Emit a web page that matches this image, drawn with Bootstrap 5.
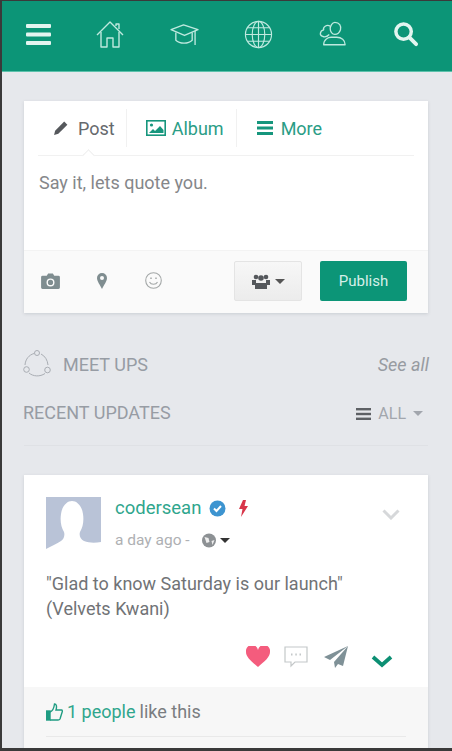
<!DOCTYPE html>
<html lang="en">
<head>
    <meta charset="UTF-8">
    <meta name="viewport" content="width=device-width, initial-scale=1.0">
    <title>Feed</title>
    <link href="https://cdn.jsdelivr.net/npm/bootstrap@5.3.0/dist/css/bootstrap.min.css" rel="stylesheet">
    <style>
        html, body { height: 751px; overflow: hidden; }
        body { background: #3a3a3a; font-family: Roboto, "Liberation Sans", sans-serif; color: #6d7074; padding: 1px 0 3px 2px; }
        .shell { height: 747px; background: #e6e8ec; overflow: hidden; }
        .topbar { height: 71px; background: #0c9577; border-bottom: 1px solid #5cc1ab; padding: 0 33px 4px 24px; }
        .topbar svg { display: block; }
        .feed-wrap { padding: 29px 24px 0 22px; }
        .box { background: #fff; box-shadow: 0 1px 3px rgba(80, 90, 100, .18); }
        .tabbar { margin: 0 14px 0 14px; height: 55px; border-bottom: 1px solid #f1f1f1; position: relative; }
        .tab-item { height: 38px; font-size: 18px; color: #2a9d86; border-right: 1px solid #f1f1f1; }
        .tab-post { padding: 0 11px 0 15px; gap: 9px; color: #66696d; }
        .tab-album { padding: 0 12px 0 19px; gap: 6px; }
        .tab-more { padding: 0 0 0 20px; gap: 8px; border-right: 0; }
        .tab-pointer { position: absolute; left: 46px; bottom: -5px; width: 9px; height: 9px; background: #fff; border-top: 1px solid #eee; border-left: 1px solid #eee; transform: rotate(45deg); }
        .say-it { height: 94px; padding: 13px 15px 0; font-size: 18px; color: #85878a; }
        .box-foot { height: 63px; background: #fafafa; border-top: 1px solid #f3f3f3; padding: 0 21px 2px 17px; }
        .foot-icons { gap: 37px; }
        .smile-icon { margin-left: 1px; margin-top: -2px; }
        .group-btn { width: 68px; height: 40px; background: linear-gradient(#f7f7f7, #ececec); border: 1px solid #e4e4e4; border-radius: 2px; color: #555; gap: 5px; }
        .publish-btn { width: 87px; height: 40px; margin-left: 18px; background: #0c9577; color: #d6efe9; font-size: 15px; border-radius: 2px; border: 0; padding: 0; }
        .caret-down { width: 0; height: 0; border-left: 5px solid transparent; border-right: 5px solid transparent; border-top: 5px solid currentColor; display: inline-block; }
        .meet-row { margin: 37px -1px 0 -1px; height: 28px; font-size: 18px; color: #979ca4; }
        .meet-label { margin-left: 12px; }
        .see-all { font-style: italic; font-size: 18px; color: #979ba1; }
        .recent-row { margin: 20px 0 0 -1px; height: 28px; font-size: 18px; color: #979ca4; }
        .filter-link { font-size: 16px; color: #a2a6ad; gap: 7px; margin: 3px 5px 0 0; }
        .rule { height: 1px; background: #dfe1e5; margin-top: 19px; }
        .post-box { margin-top: 29px; height: 300px; }
        .post-body { height: 212px; padding: 22px 37px 0 22px; position: relative; }
        .avatar-pic { width: 55px; height: 52px; display: block; }
        .user-head { gap: 14px; }
        .user-name { font-size: 18.5px; color: #2fa68d; line-height: 22px; }
        .post-time { font-size: 15.500px; color: #aeb0b3; margin-top: 12px; line-height: 18px; gap: 7px; }
        .post-text { margin-top: 22px; font-size: 18px; line-height: 25px; color: #717376; }
        .post-actions { position: absolute; left: 222px; top: 170px; gap: 14px; }
        .post-send { margin-left: 2px; }
        .post-down { margin: 10px 0 0 9px; }
        .post-chevron { position: absolute; right: 28px; top: 34px; }
        .post-foot { height: 70px; background: #f7f7f7; padding: 0 22px; font-size: 18px; }
        .like-line { height: 50px; border-bottom: 1px solid #e9e9e9; gap: 4px; color: #7a7d80; }
        .like-count { color: #2fa68d; }
        .caret-dark { color: #333; margin-left: -4px; }
    </style>
</head>
<body>
    <div class="shell">
        <!-- top icons -->
        <nav class="topbar d-flex align-items-center justify-content-between">
            <svg width="25" height="21" viewBox="0 0 25 21" fill="#e3f5f0"><rect y="0" width="25" height="4" rx="1"/><rect y="8.500" width="25" height="4" rx="1"/><rect y="17" width="25" height="4" rx="1"/></svg>
            <svg width="28" height="27" viewBox="0 0 28 27" fill="none" stroke="#bfe9df" stroke-width="1.400" stroke-linejoin="round"><path d="M1 14 14 1 27 14"/><path d="M5 11v15h6v-9h6v9h6V11"/><path d="M20 5V3h3v5"/></svg>
            <svg width="29" height="25" viewBox="0 0 30 26" fill="none" stroke="#bfe9df" stroke-width="1.400" stroke-linejoin="round"><path d="M1 8 14 3l15 5-14 6z"/><path d="M6 11v8c4 4 13 4 17 0v-8"/><path d="M26 9v15"/></svg>
            <svg width="29" height="29" viewBox="0 0 30 30" fill="none" stroke="#bfe9df" stroke-width="1.200"><circle cx="15" cy="15" r="13.500"/><ellipse cx="15" cy="15" rx="6.500" ry="13.500"/><path d="M15 1.500v27M1.500 15h27M3.500 8h23M3.500 22h23"/></svg>
            <svg width="28" height="26" viewBox="0 0 30 27" fill="none" stroke="#bfe9df" stroke-width="1.400" stroke-linejoin="round"><path d="M17 1c5 0 7 4 6 8-1 3-3 5-6 5s-5-3-5-6 2-7 5-7z"/><path d="M12 5C8 3 4 6 5 9c-4 1-5 6-1 7 2 1 5 0 7-2"/><path d="M5 25c0-6 5-8 8-8h6c5 0 9 3 9 8z"/></svg>
            <svg width="27" height="27" viewBox="0 0 28 28" fill="none" stroke="#e3f5f0"><circle cx="12" cy="11" r="8" stroke-width="3.600"/><path d="M18 17l7 7" stroke-width="4" stroke-linecap="round"/></svg>
        </nav>

        <div class="feed-wrap">
            <!-- composer -->
            <section class="box">
                <div class="tabbar d-flex align-items-center">
                    <a class="tab-item tab-post d-flex align-items-center text-decoration-none">
                        <svg width="16" height="16" viewBox="0 0 15 15" fill="#55585c"><path d="M10.500 1.500 13.500 4.500 5 13 1 14l1-4z"/></svg>Post
                    </a>
                    <a class="tab-item tab-album d-flex align-items-center text-decoration-none">
                        <svg width="20" height="16" viewBox="0 0 20 16"><rect x=".8" y=".8" width="18.400" height="14.400" fill="none" stroke="#16967d" stroke-width="1.600"/><circle cx="5.500" cy="5" r="1.600" fill="#16967d"/><path d="M3 13l4-4 2 2 5-5 3.500 4v3z" fill="#16967d"/></svg>Album
                    </a>
                    <a class="tab-item tab-more d-flex align-items-center text-decoration-none">
                        <svg width="16" height="14" viewBox="0 0 16 14" fill="#16967d"><rect width="16" height="3"/><rect y="5.500" width="16" height="3"/><rect y="11" width="16" height="3"/></svg>More
                    </a>
                    <span class="tab-pointer"></span>
                </div>
                <div class="say-it">Say it, lets quote you.</div>
                <div class="box-foot d-flex align-items-center">
                    <div class="foot-icons d-flex align-items-center flex-grow-1">
                        <svg width="19" height="16" viewBox="0 0 20 17"><path d="M1.500 3H6l1.500-2.500h5L14 3h4.500A1.500 1.500 0 0 1 20 4.500V15.500A1.500 1.500 0 0 1 18.500 17h-17A1.500 1.500 0 0 1 0 15.500V4.500A1.500 1.500 0 0 1 1.500 3z" fill="#7f8d90"/><circle cx="10" cy="10" r="3.500" fill="none" stroke="#fafafa" stroke-width="1.500"/></svg>
                        <svg width="10" height="16" viewBox="0 0 10 16"><path d="M5 0a5 5 0 0 1 5 5c0 3-3 7-5 11C3 12 0 8 0 5a5 5 0 0 1 5-5z" fill="#7f8d90"/><circle cx="5" cy="5" r="2" fill="#fafafa"/></svg>
                        <svg class="smile-icon" width="17" height="17" viewBox="0 0 17 17" fill="none" stroke="#a4a8a8" stroke-width="1.100"><circle cx="8.500" cy="8.500" r="7.800"/><path d="M4.500 10c1.500 3 6.500 3 8 0"/><path d="M6 5.500v1.500M11 5.500v1.500" stroke-width="1.500"/></svg>
                    </div>
                    <button class="group-btn d-flex align-items-center justify-content-center p-0" type="button" aria-label="Audience">
                        <svg width="18" height="15" viewBox="0 0 18 15" fill="#55585c"><circle cx="4" cy="3" r="2.300"/><circle cx="14" cy="3" r="2.300"/><circle cx="9" cy="4" r="2.800"/><path d="M0 6h4v3h10V6h4v5h-3v4H3v-4H0z"/></svg>
                        <span class="caret-down"></span>
                    </button>
                    <button class="publish-btn" type="button">Publish</button>
                </div>
            </section>

            <div class="meet-row d-flex align-items-center">
                <svg width="28" height="28" viewBox="0 0 28 28" fill="none" stroke="#a9adb3" stroke-width="1"><path d="M11 3.500C6 5 2.500 9 2 15"/><path d="M18 4c4 2 6.500 6 7 11"/><path d="M6 23c4 3.500 11 4 16 .5"/><circle cx="14" cy="3" r="2.500"/><circle cx="3.500" cy="19.500" r="2.800"/><circle cx="24.500" cy="20" r="2.800"/></svg>
                <span class="meet-label flex-grow-1">MEET UPS</span>
                <a class="see-all text-decoration-none">See all</a>
            </div>
            <div class="recent-row d-flex align-items-center justify-content-between">
                <span>RECENT UPDATES</span>
                <span class="filter-link d-flex align-items-center">
                    <svg width="15" height="12" viewBox="0 0 15 12" fill="#5e6165"><rect width="15" height="2.400"/><rect y="4.800" width="15" height="2.400"/><rect y="9.600" width="15" height="2.400"/></svg>
                    ALL <span class="caret-down"></span>
                </span>
            </div>
            <div class="rule"></div>

            <!-- post -->
            <article class="box post-box">
                <div class="post-body">
                    <div class="user-head d-flex">
                        <svg class="avatar-pic" viewBox="0 0 55 52"><rect width="55" height="52" fill="#b9c3d7"/><path d="M0 52c5-3 11-5 15-8 3-2 4-6 3-9-3-5-4-11-3-18 1-8 6-13 11-13s10 5 11 13c1 7 0 13-3 18-1 3 0 7 4 9 5 2 11 2 17 1v7z" fill="#fff"/></svg>
                        <div>
                            <div class="user-name d-flex align-items-center gap-2">
                                <span>codersean</span>
                                <svg width="17" height="17" viewBox="0 0 17 17"><circle cx="8.500" cy="8.500" r="8" fill="#3d94d0"/><path d="M5 8.500l2.500 2.500L12 6" fill="none" stroke="#fff" stroke-width="2"/></svg>
                                <svg class="ms-1" width="10" height="17" viewBox="0 0 10 17"><path d="M5 0h3L6.500 6H10L3 17l1.500-8H1z" fill="#d8364a"/></svg>
                            </div>
                            <div class="post-time d-flex align-items-center">
                                <span>a day ago -</span>
                                <svg class="ms-1" width="16" height="15" viewBox="0 0 15 15"><circle cx="7.500" cy="7.500" r="7" fill="#8d9194"/><path d="M3 4l4 1 1 4-3 1zM10 8l3-1-2 5z" fill="#eee"/></svg>
                                <span class="caret-down caret-dark"></span>
                            </div>
                        </div>
                    </div>
                    <p class="post-text mb-0">"Glad to know Saturday is our launch"<br>(Velvets Kwani)</p>
                    <svg class="post-chevron" width="18" height="11" viewBox="0 0 18 11" fill="none" stroke="#d6d8da" stroke-width="3"><path d="M1.500 1.500 9 9l7.500-7.500"/></svg>
                    <div class="post-actions d-flex align-items-center">
                        <svg width="24" height="21" viewBox="0 0 24 21"><path d="M12 21C5 15 0 11 0 6a6 6 0 0 1 12-2 6 6 0 0 1 12 2c0 5-5 9-12 15z" fill="#f45c7d"/></svg>
                        <svg width="24" height="22" viewBox="0 0 24 22" fill="none" stroke="#c4c8c9" stroke-width="1.200"><path d="M1 1h22v15H11l-4 4v-4H1z"/><path d="M7 8.500h1.500M11.300 8.500h1.500M15.500 8.500H17" stroke-width="2"/></svg>
                        <svg class="post-send" width="24" height="22" viewBox="0 0 24 22"><path d="M24 0 0 11l6 3L24 0 10 16l1 6 3-4 5 2z" fill="#7f9197"/></svg>
                        <svg class="post-down" width="22" height="13" viewBox="0 0 22 13" fill="none" stroke="#0c8f73" stroke-width="3.800"><path d="M2 2l9 8 9-8"/></svg>
                    </div>
                </div>
                <div class="post-foot">
                    <div class="like-line d-flex align-items-center">
                        <svg width="17" height="18" viewBox="0 0 17 18" fill="none" stroke="#1f9c82" stroke-width="1.400"><rect x=".7" y="8" width="3.300" height="9" fill="#1f9c82"/><path d="M4 9c3-1 4-4 4.500-8 2 0 2.500 2.500 1.500 6h5.500c1 0 1 1.500.5 2.500L14 16c-.5 1-1 1-2 1H4"/></svg>
                        <span class="like-count">1 people</span> <span>like this</span>
                    </div>
                </div>
            </article>
        </div>
    </div>
</body>
</html>
